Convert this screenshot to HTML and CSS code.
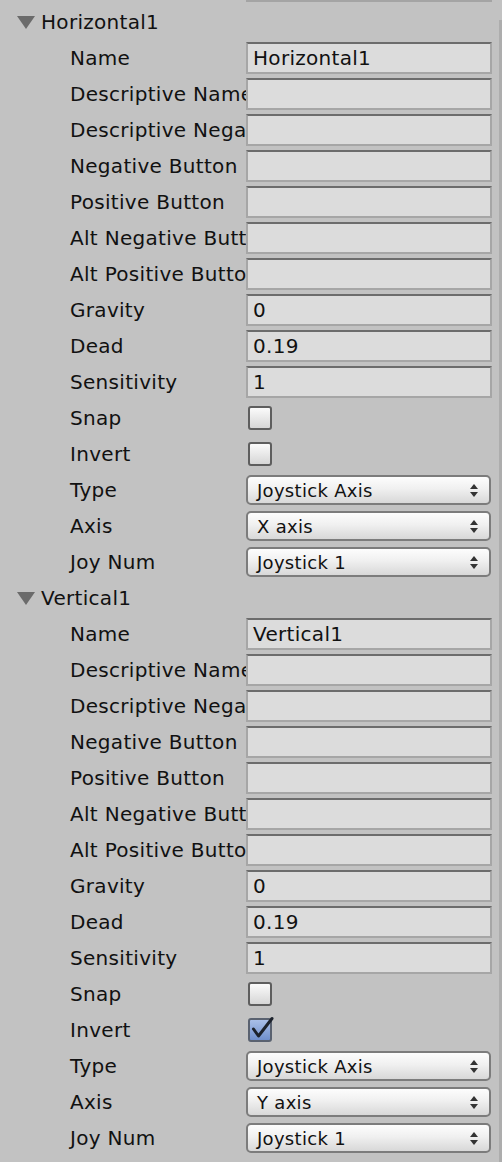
FILE: index.html
```html
<!DOCTYPE html>
<html>
<head>
<meta charset="utf-8">
<link rel="stylesheet" href="styles.css">
</head>
<body>
<div class="window">
  <div class="content">
    <div class="prev-field"></div>

    <section class="axis">
      <div class="axis-header"><span class="tri"></span><span class="axis-title">Horizontal1</span></div>
      <div class="row"><div class="label">Name</div><div class="field">Horizontal1</div></div>
      <div class="row"><div class="label">Descriptive Name</div><div class="field"></div></div>
      <div class="row"><div class="label">Descriptive Negative Name</div><div class="field"></div></div>
      <div class="row"><div class="label">Negative Button</div><div class="field"></div></div>
      <div class="row"><div class="label">Positive Button</div><div class="field"></div></div>
      <div class="row"><div class="label">Alt Negative Button</div><div class="field"></div></div>
      <div class="row"><div class="label">Alt Positive Button</div><div class="field"></div></div>
      <div class="row"><div class="label">Gravity</div><div class="field">0</div></div>
      <div class="row"><div class="label">Dead</div><div class="field">0.19</div></div>
      <div class="row"><div class="label">Sensitivity</div><div class="field">1</div></div>
      <div class="row"><div class="label">Snap</div><div class="check"></div></div>
      <div class="row"><div class="label">Invert</div><div class="check"></div></div>
      <div class="row"><div class="label">Type</div><div class="popup"><span class="popup-text">Joystick Axis</span><span class="arrows"><span class="up"></span><span class="down"></span></span></div></div>
      <div class="row"><div class="label">Axis</div><div class="popup"><span class="popup-text">X axis</span><span class="arrows"><span class="up"></span><span class="down"></span></span></div></div>
      <div class="row"><div class="label">Joy Num</div><div class="popup"><span class="popup-text">Joystick 1</span><span class="arrows"><span class="up"></span><span class="down"></span></span></div></div>
    </section>

    <section class="axis">
      <div class="axis-header"><span class="tri"></span><span class="axis-title">Vertical1</span></div>
      <div class="row"><div class="label">Name</div><div class="field">Vertical1</div></div>
      <div class="row"><div class="label">Descriptive Name</div><div class="field"></div></div>
      <div class="row"><div class="label">Descriptive Negative Name</div><div class="field"></div></div>
      <div class="row"><div class="label">Negative Button</div><div class="field"></div></div>
      <div class="row"><div class="label">Positive Button</div><div class="field"></div></div>
      <div class="row"><div class="label">Alt Negative Button</div><div class="field"></div></div>
      <div class="row"><div class="label">Alt Positive Button</div><div class="field"></div></div>
      <div class="row"><div class="label">Gravity</div><div class="field">0</div></div>
      <div class="row"><div class="label">Dead</div><div class="field">0.19</div></div>
      <div class="row"><div class="label">Sensitivity</div><div class="field">1</div></div>
      <div class="row"><div class="label">Snap</div><div class="check"></div></div>
      <div class="row"><div class="label">Invert</div><div class="check checked"><svg class="tick" width="24" height="24" viewBox="0 0 24 24"><path d="M5.5 11 L10.5 18 L24 0.5" fill="none" stroke="#1c222c" stroke-width="3" stroke-linecap="round" stroke-linejoin="round"/></svg></div></div>
      <div class="row"><div class="label">Type</div><div class="popup"><span class="popup-text">Joystick Axis</span><span class="arrows"><span class="up"></span><span class="down"></span></span></div></div>
      <div class="row"><div class="label">Axis</div><div class="popup"><span class="popup-text">Y axis</span><span class="arrows"><span class="up"></span><span class="down"></span></span></div></div>
      <div class="row"><div class="label">Joy Num</div><div class="popup"><span class="popup-text">Joystick 1</span><span class="arrows"><span class="up"></span><span class="down"></span></span></div></div>
    </section>
  </div>
  <div class="scrollbar"></div>
</div>
</body>
</html>
```

FILE: styles.css
```css
html, body {
  margin: 0;
  padding: 0;
  background: #c2c2c2;
}

body {
  font-family: "DejaVu Sans", "Liberation Sans", sans-serif;
  font-size: 20px;
  letter-spacing: 0.3px;
  color: #111;
}

.window {
  display: flex;
  width: 502px;
  height: 1162px;
  overflow: hidden;
}

.content {
  width: 499px;
  flex: none;
}

.scrollbar {
  width: 3px;
  margin-top: 20px;
  background: #adadad;
  flex: none;
}

.prev-field {
  margin-left: 246px;
  width: 246px;
  height: 2px;
  box-sizing: border-box;
  background: #a4a4a4;
}

.axis {
  display: flex;
  flex-direction: column;
}

.axis:first-of-type {
  margin-top: 2px;
}

.axis-header {
  height: 36px;
  display: flex;
  align-items: center;
  padding-left: 17px;
}

.tri {
  width: 0;
  height: 0;
  border-left: 9px solid transparent;
  border-right: 9px solid transparent;
  border-top: 13px solid #6b6b6b;
  margin-right: 6px;
  margin-top: 1px;
}

.axis-title {
  white-space: nowrap;
}

.row {
  height: 36px;
  display: flex;
  align-items: center;
}

.label {
  width: 246px;
  flex: none;
  box-sizing: border-box;
  padding-left: 70px;
  padding-right: 1px;
  white-space: nowrap;
  overflow: hidden;
}

.field {
  width: 246px;
  height: 32px;
  box-sizing: border-box;
  border: 2px solid #a6a6a6;
  border-top-color: #6c6c6c;
  background: #dcdcdc;
  padding-left: 5px;
  line-height: 28px;
  white-space: nowrap;
  overflow: hidden;
}

.check {
  position: relative;
  width: 24px;
  height: 24px;
  margin-left: 2px;
  box-sizing: border-box;
  border: 2px solid #5e5e5e;
  border-radius: 3px;
  background: linear-gradient(#fbfbfb, #d6d6d6);
}

.check.checked {
  background: linear-gradient(#a9bfe8, #6f8fcc);
  border-color: #5a6270;
}

.tick {
  position: absolute;
  left: -2px;
  top: -2px;
  overflow: visible;
}

.popup {
  width: 245px;
  height: 30px;
  box-sizing: border-box;
  border: 2px solid #7c7c7c;
  border-radius: 5px;
  background: linear-gradient(#fdfdfd, #f0f0f0 45%, #d8d8d8);
  display: flex;
  align-items: center;
  padding-left: 9px;
  padding-right: 11px;
}

.popup-text {
  flex: 1;
  font-size: 18px;
  white-space: nowrap;
}

.arrows {
  display: flex;
  flex-direction: column;
  gap: 3px;
}

.up {
  width: 0;
  height: 0;
  border-left: 4px solid transparent;
  border-right: 4px solid transparent;
  border-bottom: 5px solid #333;
}

.down {
  width: 0;
  height: 0;
  border-left: 4px solid transparent;
  border-right: 4px solid transparent;
  border-top: 5px solid #333;
}
```
